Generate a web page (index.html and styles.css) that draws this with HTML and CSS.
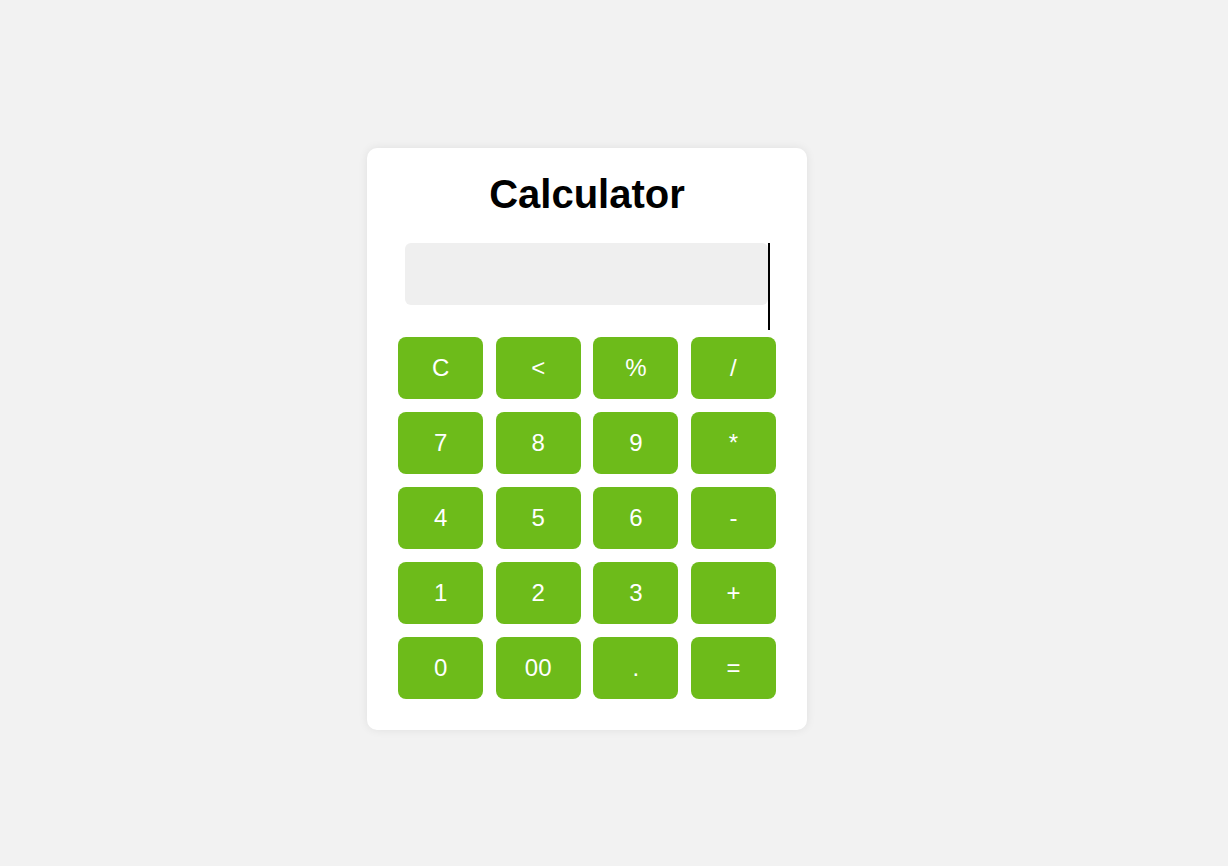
FILE: index.html
```html
<!DOCTYPE html>
<html lang="en">
<head>
<meta charset="utf-8">
<title>Calculator</title>
<link rel="stylesheet" href="styles.css">
</head>
<body>
<main class="page">
  <section class="calculator">
    <h1 class="title">Calculator</h1>
    <div class="display-wrap">
      <div class="display"></div>
      <div class="caret"></div>
    </div>
    <div class="keys">
      <button class="key">C</button>
      <button class="key">&lt;</button>
      <button class="key">%</button>
      <button class="key">/</button>
      <button class="key">7</button>
      <button class="key">8</button>
      <button class="key">9</button>
      <button class="key">*</button>
      <button class="key">4</button>
      <button class="key">5</button>
      <button class="key">6</button>
      <button class="key">-</button>
      <button class="key">1</button>
      <button class="key">2</button>
      <button class="key">3</button>
      <button class="key">+</button>
      <button class="key">0</button>
      <button class="key">00</button>
      <button class="key">.</button>
      <button class="key">=</button>
    </div>
  </section>
</main>
</body>
</html>
```
FILE: styles.css
```css
* { box-sizing: border-box; }
html, body { margin: 0; padding: 0; }
body {
  background: #f2f2f2;
  font-family: "Liberation Sans", Arial, sans-serif;
  width: 1228px;
  height: 866px;
}
.page {
  display: flex;
  justify-content: flex-start;
  padding-top: 148px;
  padding-left: 367px;
}
.calculator {
  width: 440px;
  background: #ffffff;
  border-radius: 10px;
  box-shadow: 0 0 10px rgba(0, 0, 0, 0.08);
  padding: 24px 31px 31px;
}
.title {
  margin: 0;
  text-align: center;
  font-size: 40px;
  font-weight: bold;
  color: #000;
  line-height: 45px;
}
.display-wrap {
  display: flex;
  height: 87px;
  margin: 26px 6px 7px 7px;
}
.display {
  flex: 1;
  height: 62px;
  background: #efefef;
  border-radius: 6px;
}
.caret {
  width: 2px;
  height: 87px;
  background: #000;
}
.keys {
  display: grid;
  grid-template-columns: repeat(4, 1fr);
  gap: 13px 12.5px;
}
.key {
  height: 62px;
  border: none;
  border-radius: 8px;
  background: #6dbb1a;
  color: #ffffff;
  font-family: "Liberation Sans", Arial, sans-serif;
  font-size: 24px;
  padding: 0;
}
```
